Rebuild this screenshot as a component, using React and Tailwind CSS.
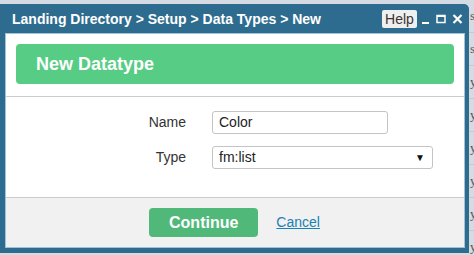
export default function App() {
  const rows = ["s", "s", "y", "y", "y", "y", "y", "y"];
  return (
    <div
      className="w-[474px] h-[255px] overflow-hidden bg-[#d5dbe3] pt-[4px] flex"
      style={{ fontFamily: '"Liberation Sans", Arial, sans-serif' }}
    >
      <div className="w-[469px] h-[249px] shrink-0 bg-[#2e6c8f] rounded-tr-[5px] flex flex-col">
        <div className="h-[29px] flex items-center pl-[12px] pr-[6px]">
          <div className="text-white font-bold text-[14px] leading-none flex-1">
            Landing Directory &gt; Setup &gt; Data Types &gt; New
          </div>
          <div className="w-[35px] h-[18px] bg-[#efefef] rounded-[2px] text-[#3a3434] text-[14px] leading-[18px] text-center">
            Help
          </div>
          <svg width="10" height="10" viewBox="0 0 10 10" className="ml-[4px] mt-[2px]">
            <rect x="1" y="7" width="7" height="2" fill="#fff" />
          </svg>
          <svg width="10" height="10" viewBox="0 0 10 10" className="ml-[5px]">
            <rect x="1" y="1.5" width="8" height="7" fill="none" stroke="#fff" strokeWidth="1.5" />
            <rect x="1" y="1" width="8" height="2" fill="#fff" />
          </svg>
          <svg width="11" height="10" viewBox="0 0 11 10" className="ml-[6px]">
            <path d="M1.5 1 L9.5 9 M9.5 1 L1.5 9" stroke="#fff" strokeWidth="2.2" />
          </svg>
        </div>
        <div className="mx-[5px] mr-[4px] h-[215px] border border-[#a4c2d7] bg-white flex flex-col">
          <div className="px-[10px] pt-[10px]">
            <div className="h-[40px] bg-[#57cc84] rounded-[4px] flex items-center pl-[20px] text-white font-bold text-[18px]">
              New Datatype
            </div>
          </div>
          <div className="mt-[12px] border-t border-[#cccccc]" />
          <div className="h-[100px] flex flex-col pt-[14px] gap-[12px]">
            <div className="flex items-center">
              <div className="w-[180px] text-right text-[14px] text-[#333]">Name</div>
              <div className="ml-[26px] w-[176px] h-[23px] border border-[#c4c4c4] rounded-[3px] flex items-center pl-[6px] text-[14px] text-[#222]">
                Color
              </div>
            </div>
            <div className="flex items-center">
              <div className="w-[180px] text-right text-[14px] text-[#333]">Type</div>
              <div className="ml-[26px] w-[221px] h-[23px] border border-[#c4c4c4] rounded-[3px] flex items-center pl-[6px] pr-[7px] text-[14px] text-[#222]">
                <span className="flex-1">fm:list</span>
                <span className="text-[10px] text-[#111]">▼</span>
              </div>
            </div>
          </div>
          <div className="flex-1 border-t border-[#cccccc] bg-[#f1f1f1] flex items-center justify-center gap-[18px] pr-[1px]">
            <div className="h-[29px] px-[20px] bg-[#50b97a] rounded-[4px] flex items-center text-white font-bold text-[16px]">
              Continue
            </div>
            <div className="text-[14px] text-[#1b80b3] underline">Cancel</div>
          </div>
        </div>
      </div>
      <div className="flex-1 overflow-hidden flex flex-col -mt-[4px]">
        {rows.map((r, i) => (
          <div
            key={i}
            className="h-[33px] shrink-0 border-b border-[#c3c9d1] text-[13px] text-[#555] pl-[1px] flex items-center"
            style={{ fontFamily: '"Liberation Serif", serif' }}
          >
            {r}
          </div>
        ))}
      </div>
    </div>
  );
}
